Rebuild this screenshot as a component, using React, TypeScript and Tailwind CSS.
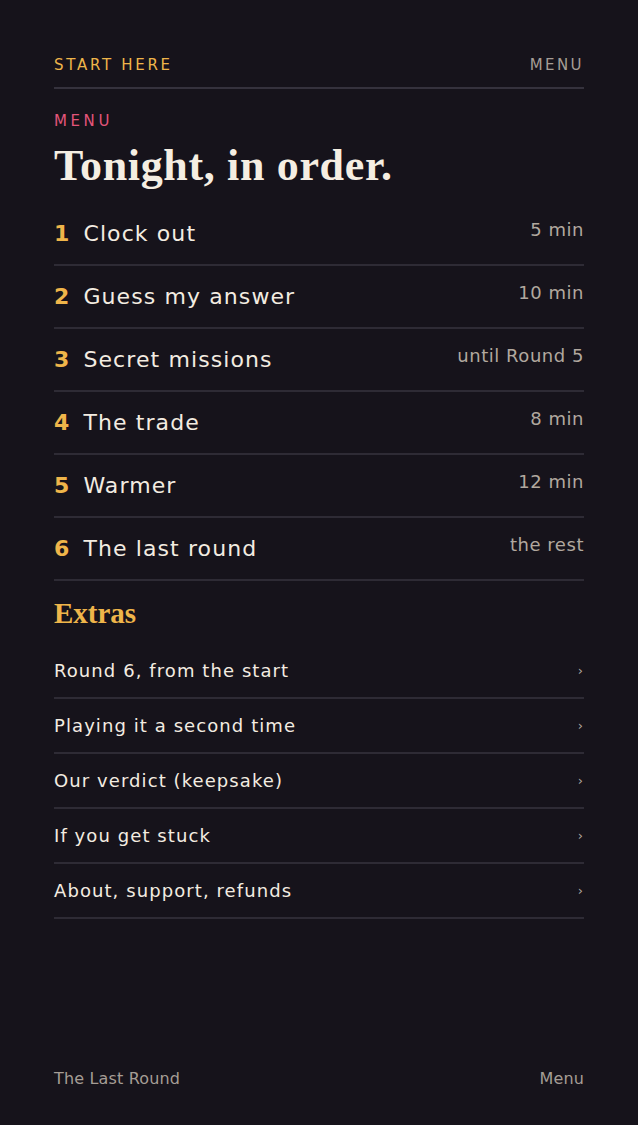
const sans = { fontFamily: '"DejaVu Sans", "Noto Sans", sans-serif' };
const serif = { fontFamily: '"Liberation Serif", "DejaVu Serif", serif' };

const courses = [
  { n: 1, title: "Clock out", time: "5 min" },
  { n: 2, title: "Guess my answer", time: "10 min" },
  { n: 3, title: "Secret missions", time: "until Round 5" },
  { n: 4, title: "The trade", time: "8 min" },
  { n: 5, title: "Warmer", time: "12 min" },
  { n: 6, title: "The last round", time: "the rest" },
];

const extras = [
  "Round 6, from the start",
  "Playing it a second time",
  "Our verdict (keepsake)",
  "If you get stuck",
  "About, support, refunds",
];

export default function App() {
  return (
    <div
      className="min-h-[1125px] bg-[#16131b] text-[#f3ece1] flex flex-col px-[54px]"
      style={sans}
    >
      {/* Top bar */}
      <header className="flex items-center justify-between pt-[54px] pb-[10px] border-b-2 border-[#35323d]">
        <span className="text-[15px] tracking-[0.18em] text-[#efb54a]">START HERE</span>
        <span className="text-[15px] tracking-[0.16em] text-[#a59d95]">MENU</span>
      </header>

      <div className="pt-[21px] text-[15px] tracking-[0.24em] text-[#e2557a]">MENU</div>
      <h1
        className="mt-[10px] text-[44px] leading-[48px] font-bold tracking-[0.015em] text-[#f5eee2]"
        style={serif}
      >
        Tonight, in order.
      </h1>

      {/* Tonight's rounds */}
      <ul className="mt-[13px]">
        {courses.map((c) => (
          <li
            key={c.n}
            className="flex items-start justify-between border-b-2 border-[#2e2b35] pt-[16px] h-[63px]"
          >
            <div className="flex items-center gap-[13px] text-[22px] leading-[30px] tracking-[0.05em]">
              <span className="font-bold text-[#efb54a]">{c.n}</span>
              <span>{c.title}</span>
            </div>
            <span className="mt-[-1px] text-[18px] leading-[24px] tracking-[0.03em] text-[#b1a89f]">
              {c.time}
            </span>
          </li>
        ))}
      </ul>

      <h2 className="mt-[15px] text-[29px] leading-[34px] font-bold text-[#efb54a]" style={serif}>
        Extras
      </h2>

      <ul className="mt-[14px]">
        {extras.map((e) => (
          <li
            key={e}
            className="flex items-center justify-between border-b-2 border-[#2e2b35] h-[55px] text-[18px] tracking-[0.06em]"
          >
            <span>{e}</span>
            <span className="text-[13px] text-[#b1a89f]">›</span>
          </li>
        ))}
      </ul>

      <footer className="mt-auto pb-[34px] flex items-center justify-between text-[16px] tracking-[0.01em] text-[#a59d95]">
        <span>The Last Round</span>
        <span>Menu</span>
      </footer>
    </div>
  );
}
